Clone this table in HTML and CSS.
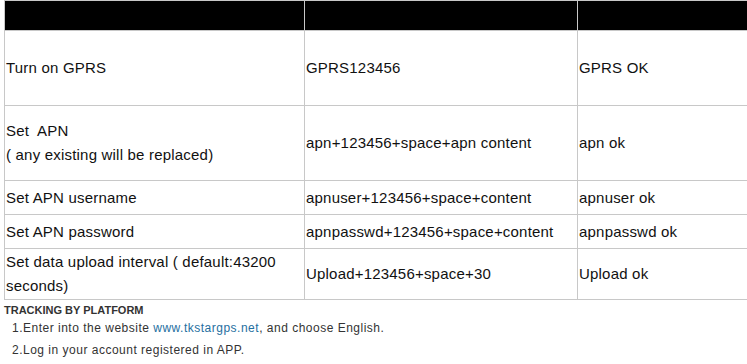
FILE: index.html
```html
<!DOCTYPE html>
<html lang="en">
<head>
    <meta charset="UTF-8">
    <title>GPRS Commands</title>
    <link rel="stylesheet" href="styles.css">
</head>
<body>
    <div class="page">
        <table class="cmd-table">
            <colgroup>
                <col class="col-desc">
                <col class="col-cmd">
                <col class="col-reply">
            </colgroup>
            <tr class="head-row">
                <td></td>
                <td></td>
                <td></td>
            </tr>
            <tr class="tall-row">
                <td>Turn on GPRS</td>
                <td>GPRS123456</td>
                <td>GPRS OK</td>
            </tr>
            <tr class="tall-row">
                <td>Set&nbsp; APN<br>( any existing will be replaced)</td>
                <td>apn+123456+space+apn content</td>
                <td>apn ok</td>
            </tr>
            <tr class="short-row">
                <td>Set APN username</td>
                <td>apnuser+123456+space+content</td>
                <td>apnuser ok</td>
            </tr>
            <tr class="short-row">
                <td>Set APN password</td>
                <td>apnpasswd+123456+space+content</td>
                <td>apnpasswd ok</td>
            </tr>
            <tr class="mid-row">
                <td>Set data upload interval ( default:43200 seconds)</td>
                <td>Upload+123456+space+30</td>
                <td>Upload ok</td>
            </tr>
        </table>

        <h4 class="section-title">TRACKING BY PLATFORM</h4>
        <p class="step">1.Enter into the website <a href="#">www.tkstargps.net</a>, and choose English.</p>
        <p class="step">2.Log in your account registered in APP.</p>
    </div>
</body>
</html>
```

FILE: styles.css
```css
html {
    overflow: hidden;
}
body {
    margin: 0;
    background-color: #fff;
    font-family: 'Liberation Sans', Arial, sans-serif;
    color: #111;
}
.page {
    padding-left: 4px;
    overflow: hidden;
}
.cmd-table {
    border-collapse: collapse;
    table-layout: fixed;
    width: 745px;
    font-size: 15px;
    line-height: 24px;
    letter-spacing: 0.2px;
}
.col-desc {
    width: 300px;
}
.col-cmd {
    width: 273px;
}
.cmd-table td {
    border: 1px solid #c8c8c8;
    padding: 0 1px;
    vertical-align: middle;
}
.head-row td {
    background-color: #000;
    height: 29px;
    padding: 0;
}
.tall-row td {
    height: 74px;
}
.short-row td {
    height: 33px;
}
.mid-row td {
    height: 50px;
}
.section-title {
    margin: 3px 0 0;
    font-size: 11px;
    line-height: 14px;
    font-weight: bold;
    color: #333;
}
.step {
    margin: 0;
    padding-left: 8px;
    font-size: 12px;
    line-height: 22px;
    letter-spacing: 0.5px;
    color: #333;
}
.step a {
    color: #1f6f9f;
    text-decoration: none;
}
```
